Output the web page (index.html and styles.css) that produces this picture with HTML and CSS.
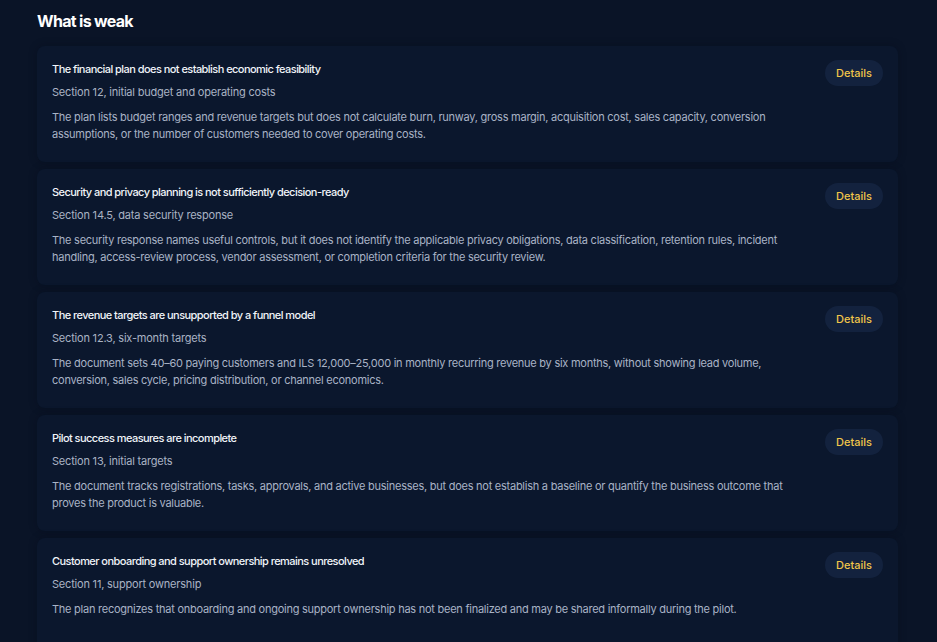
FILE: index.html
```html
<!DOCTYPE html>
<html lang="en">
<head>
    <meta charset="UTF-8">
    <meta name="viewport" content="width=device-width, initial-scale=1.0">
    <title>Review - What is weak</title>
    <link rel="stylesheet" href="styles.css">
</head>
<body>
    <section class="weak">
        <h2>What is weak</h2>

        <div class="issues">
            <div class="issue">
                <div class="issue-body">
                    <h3>The financial plan does not establish economic feasibility</h3>
                    <p class="ref">Section 12, initial budget and operating costs</p>
                    <p class="desc">The plan lists budget ranges and revenue targets but does not calculate burn, runway, gross margin, acquisition cost, sales capacity, conversion assumptions, or the number of customers needed to cover operating costs.</p>
                </div>
                <button class="details-btn">Details</button>
            </div>

            <div class="issue">
                <div class="issue-body">
                    <h3>Security and privacy planning is not sufficiently decision-ready</h3>
                    <p class="ref">Section 14.5, data security response</p>
                    <p class="desc">The security response names useful controls, but it does not identify the applicable privacy obligations, data classification, retention rules, incident handling, access-review process, vendor assessment, or completion criteria for the security review.</p>
                </div>
                <button class="details-btn">Details</button>
            </div>

            <div class="issue">
                <div class="issue-body">
                    <h3>The revenue targets are unsupported by a funnel model</h3>
                    <p class="ref">Section 12.3, six-month targets</p>
                    <p class="desc">The document sets 40–60 paying customers and ILS 12,000–25,000 in monthly recurring revenue by six months, without showing lead volume, conversion, sales cycle, pricing distribution, or channel economics.</p>
                </div>
                <button class="details-btn">Details</button>
            </div>

            <div class="issue">
                <div class="issue-body">
                    <h3>Pilot success measures are incomplete</h3>
                    <p class="ref">Section 13, initial targets</p>
                    <p class="desc">The document tracks registrations, tasks, approvals, and active businesses, but does not establish a baseline or quantify the business outcome that proves the product is valuable.</p>
                </div>
                <button class="details-btn">Details</button>
            </div>

            <div class="issue">
                <div class="issue-body">
                    <h3>Customer onboarding and support ownership remains unresolved</h3>
                    <p class="ref">Section 11, support ownership</p>
                    <p class="desc">The plan recognizes that onboarding and ongoing support ownership has not been finalized and may be shared informally during the pilot.</p>
                </div>
                <button class="details-btn">Details</button>
            </div>
        </div>
    </section>
</body>
</html>
```

FILE: styles.css
```css
* {
    margin: 0;
    padding: 0;
    box-sizing: border-box;
}

body {
    font-family: Inter, 'Noto Sans', sans-serif;
    background: #0a1427;
    color: #e8ecf3;
    min-height: 100vh;
    overflow: hidden;
}

.weak {
    padding: 11px 39px 0 37px;
}

h2 {
    font-size: 16px;
    font-weight: 700;
    color: #ffffff;
    letter-spacing: -0.7px;
    line-height: 20px;
    margin-bottom: 15px;
}

.issues {
    display: flex;
    flex-direction: column;
    gap: 7px;
}

/* cards sit almost flush with the page, only a faint lift */
.issue {
    display: flex;
    align-items: flex-start;
    justify-content: space-between;
    gap: 24px;
    height: 116px;
    padding: 15px 15px 0 15px;
    background: #0b172d;
    border-radius: 8px;
    box-shadow: 0 0 8px rgba(5, 11, 24, 0.3);
}

.issue-body {
    max-width: 745px;
}

h3 {
    font-size: 11px;
    font-weight: 500;
    color: #f1f4f9;
    letter-spacing: -0.55px;
    line-height: 16px;
}

.ref {
    font-size: 11px;
    color: #aab3c4;
    letter-spacing: -0.2px;
    line-height: 16px;
    margin-top: 7px;
}

.desc {
    font-size: 11px;
    color: #a9b3c6;
    letter-spacing: -0.25px;
    line-height: 17px;
    margin-top: 9px;
}

.details-btn {
    flex-shrink: 0;
    font-family: Inter, 'Noto Sans', sans-serif;
    font-size: 11px;
    font-weight: 500;
    color: #f0c54a;
    background: #13223e;
    border: none;
    border-radius: 13px;
    height: 26px;
    padding: 0 11px;
    margin-top: -1px;
    cursor: pointer;
}
```
